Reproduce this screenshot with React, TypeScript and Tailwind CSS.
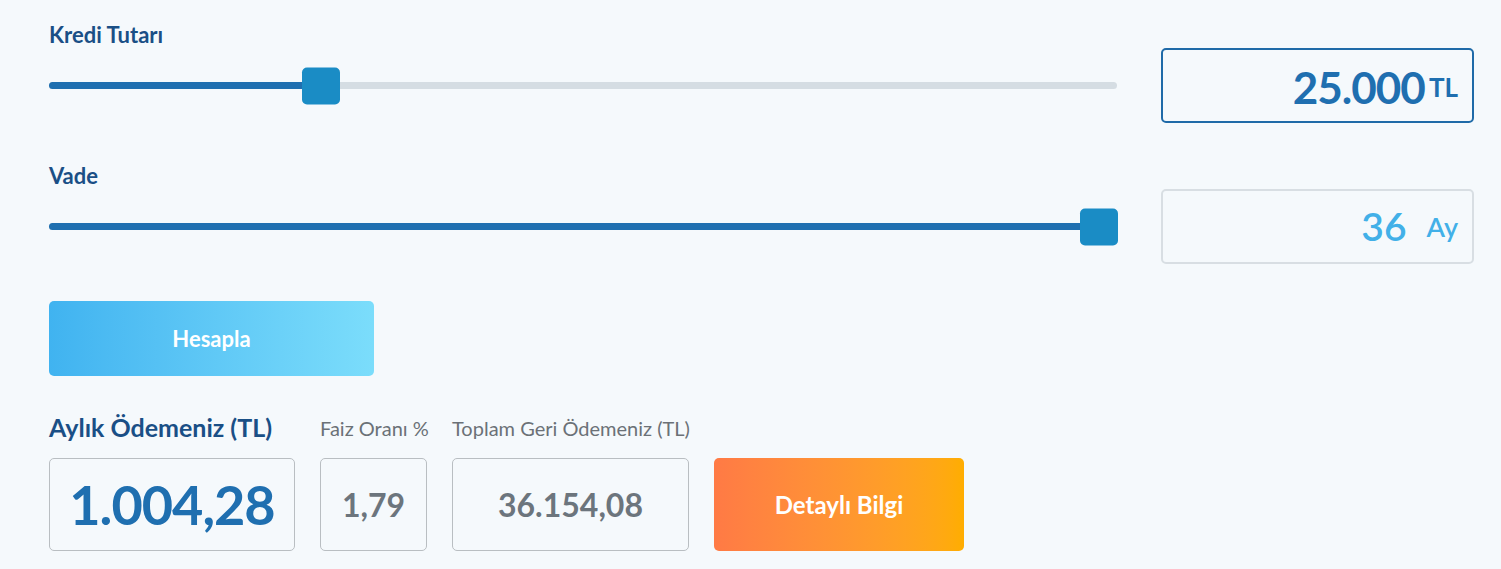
const FONT = { fontFamily: 'Lato, "Open Sans", sans-serif' };

function Slider({ percent, thumbLeft }: { percent: string; thumbLeft: string }) {
  return (
    <div className="relative h-[75px] flex items-center">
      <div className="relative w-full h-[7px] rounded-full bg-[#d5dde3]">
        <div className={`absolute left-0 top-0 h-full rounded-full bg-[#1f6fb0] ${percent}`} />
      </div>
      <div
        className={`absolute top-1/2 -translate-y-1/2 w-[38px] h-[37px] rounded-[5px] bg-[#1a8cc5] ${thumbLeft}`}
      />
    </div>
  );
}

export default function App() {
  return (
    <div className="min-h-[569px] bg-[#f5f9fc] pl-[49px] pt-[20px]" style={FONT}>
      {/* Kredi Tutarı */}
      <div className="flex gap-[44px]">
        <div className="w-[1068px] shrink-0">
          <div className="h-[28px] flex items-center text-[22px] font-bold text-[#1a4f86]">Kredi Tutarı</div>
          <Slider percent="w-[26%]" thumbLeft="left-[253px]" />
        </div>
        <div className="mt-[28px] w-[313px] shrink-0 h-[75px] rounded-[5px] border-2 border-[#1f6aa8] flex items-end justify-end pb-[12px] pr-[14px] text-[#1f6fb0] font-bold">
          <span className="text-[44px] tracking-[-1px] leading-none">25.000</span>
          <span className="text-[26px] ml-[4px] mb-[9px] leading-none">TL</span>
        </div>
      </div>

      {/* Vade */}
      <div className="flex gap-[44px] mt-[38px]">
        <div className="w-[1068px] shrink-0">
          <div className="h-[28px] flex items-center text-[22px] font-bold text-[#1a4f86]">Vade</div>
          <Slider percent="w-full" thumbLeft="left-[1031px]" />
        </div>
        <div className="mt-[28px] w-[313px] shrink-0 h-[75px] rounded-[5px] border-2 border-[#d8dee3] flex items-center justify-end pr-[14px] text-[#42b0e8] font-semibold">
          <span className="text-[39px] leading-none">36</span>
          <span className="text-[27px] ml-[20px] leading-none">Ay</span>
        </div>
      </div>

      <button className="mt-[37px] w-[325px] h-[75px] rounded-[5px] bg-gradient-to-r from-[#40b3f0] to-[#7bddfb] text-white text-[22px] font-bold">
        Hesapla
      </button>

      {/* Sonuçlar */}
      <div className="flex gap-[25px] mt-[34px]">
        <div className="w-[246px] shrink-0">
          <div className="h-[36px] flex items-center text-[25px] font-bold text-[#1a4f86] whitespace-nowrap">Aylık Ödemeniz (TL)</div>
          <div className="mt-[12px] h-[93px] rounded-[5px] border border-[#b9bec2] flex items-center justify-center text-[54px] font-bold text-[#1f6fb0] tracking-[-1px]">
            1.004,28
          </div>
        </div>
        <div className="w-[107px] shrink-0">
          <div className="h-[36px] flex items-center text-[20px] text-[#6b7177] whitespace-nowrap">Faiz Oranı %</div>
          <div className="mt-[12px] h-[93px] rounded-[5px] border border-[#b9bec2] flex items-center justify-center text-[32px] font-bold text-[#6c757d]">
            1,79
          </div>
        </div>
        <div className="w-[237px] shrink-0">
          <div className="h-[36px] flex items-center text-[20px] text-[#6b7177] whitespace-nowrap">Toplam Geri Ödemeniz (TL)</div>
          <div className="mt-[12px] h-[93px] rounded-[5px] border border-[#b9bec2] flex items-center justify-center text-[32px] font-bold text-[#6c757d]">
            36.154,08
          </div>
        </div>
        <div className="w-[250px] shrink-0 pt-[48px]">
          <button className="w-full h-[93px] rounded-[5px] bg-gradient-to-r from-[#ff7a45] to-[#ffad00] text-white text-[24px] font-bold">
            Detaylı Bilgi
          </button>
        </div>
      </div>
    </div>
  );
}
